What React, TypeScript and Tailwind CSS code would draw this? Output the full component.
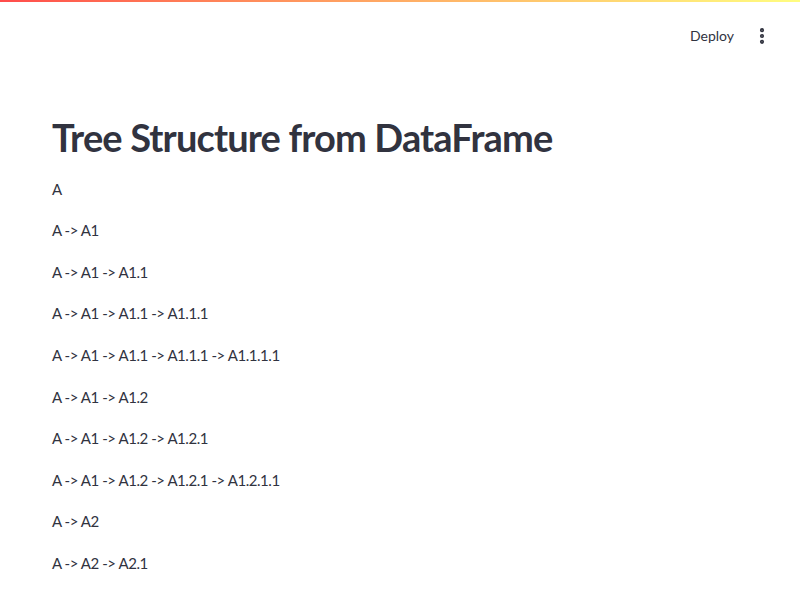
import { EllipsisVertical } from "lucide-react";

const rows = [
    "A",
    "A -> A1",
    "A -> A1 -> A1.1",
    "A -> A1 -> A1.1 -> A1.1.1",
    "A -> A1 -> A1.1 -> A1.1.1 -> A1.1.1.1",
    "A -> A1 -> A1.2",
    "A -> A1 -> A1.2 -> A1.2.1",
    "A -> A1 -> A1.2 -> A1.2.1 -> A1.2.1.1",
    "A -> A2",
    "A -> A2 -> A2.1",
    "A -> A2 -> A2.1 -> A2.1.1",
];

export default function App() {
    return (
        <div className="h-[600px] w-[800px] overflow-hidden bg-white text-[#31333f] font-['Lato','Noto_Sans',sans-serif]">
            <div className="h-[2px] bg-gradient-to-r from-[#ff4b4b] to-[#fffd80]" />
            <header className="flex h-[68px] items-center justify-end pr-[22px]">
                <button className="px-3 text-sm leading-none text-[#31333f]">Deploy</button>
                <button className="flex h-8 w-8 items-center justify-center">
                    <EllipsisVertical size={20} strokeWidth={3} />
                </button>
            </header>
            <main className="px-[52px] pt-[45px]">
                <h1 className="pb-[16px] text-[38px] font-bold leading-[1.2] tracking-[-0.85px]">
                    Tree Structure from DataFrame
                </h1>
                <div>
                    {rows.map((row) => (
                        <p key={row} className="mb-4 text-[15px] leading-[25.6px] tracking-[-0.45px]">
                            {row}
                        </p>
                    ))}
                </div>
            </main>
        </div>
    );
}
